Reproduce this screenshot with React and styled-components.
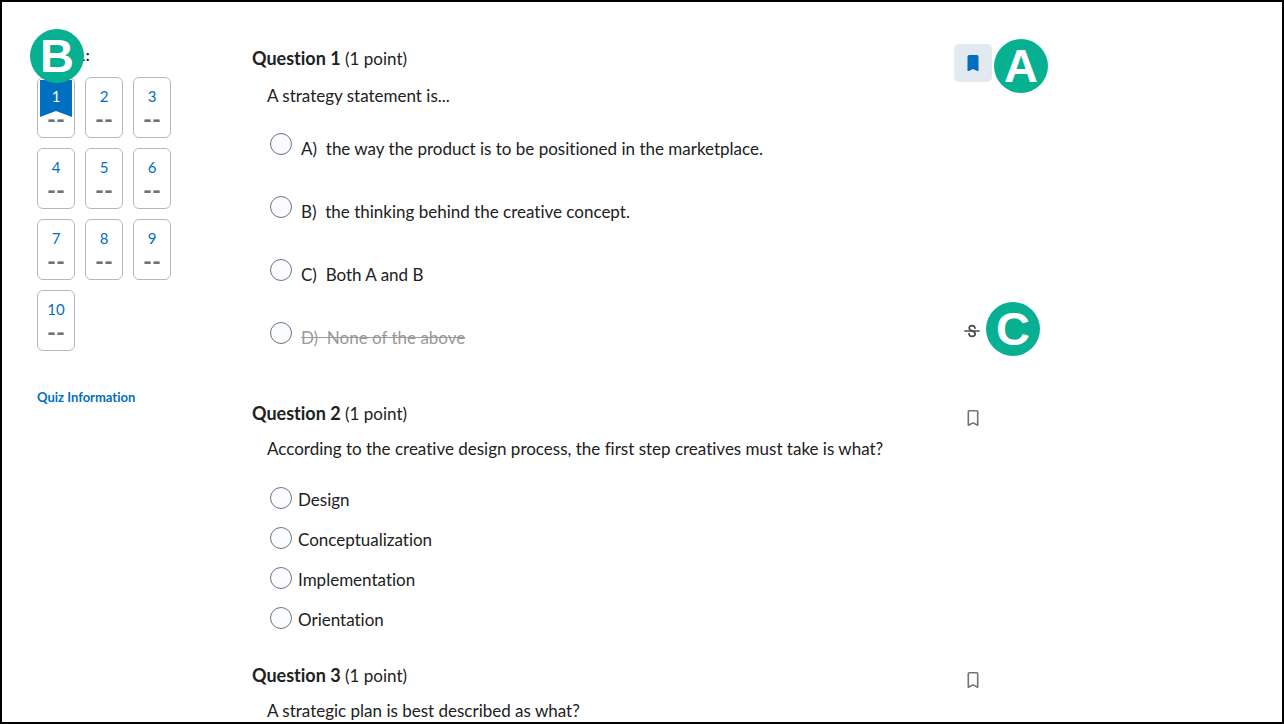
import { useState } from "react";
import styled, { createGlobalStyle } from "styled-components";

const pageQuestions = [1, 2, 3, 4, 5, 6, 7, 8, 9, 10];

const questions = [
  {
    number: 1,
    prompt: "A strategy statement is...",
    spaced: true,
    badge: "A",
    options: [
      { letter: "A)", text: "the way the product is to be positioned in the marketplace." },
      { letter: "B)", text: "the thinking behind the creative concept." },
      { letter: "C)", text: "Both A and B" },
      { letter: "D)", text: "None of the above", struck: true, badge: "C" },
    ],
  },
  {
    number: 2,
    prompt:
      "According to the creative design process, the first step creatives must take is what?",
    options: [
      { text: "Design" },
      { text: "Conceptualization" },
      { text: "Implementation" },
      { text: "Orientation" },
    ],
  },
  {
    number: 3,
    prompt: "A strategic plan is best described as what?",
    options: [],
  },
];

function BookmarkIcon({ filled }) {
  return (
    <svg width="18" height="18" viewBox="0 0 18 18" aria-hidden="true">
      {filled ? (
        <path
          d="M5.200 1h7.600a1.700 1.700 0 0 1 1.700 1.700V17h-1.200L9 15l-4.300 2H3.500V2.700A1.700 1.700 0 0 1 5.200 1z"
          fill="#006fbf"
        />
      ) : (
        <path
          d="M5.300 1.800h7.400a1 1 0 0 1 1 1v13.400L9 13.900l-4.700 2.300V2.800a1 1 0 0 1 1-1z"
          fill="none"
          stroke="#6e7376"
          strokeWidth="1.600"
          strokeLinejoin="round"
        />
      )}
    </svg>
  );
}

function StrikeIcon() {
  return (
    <svg width="16" height="14" viewBox="0 0 16 14" aria-hidden="true">
      <g fill="none" stroke="#494c4e" strokeWidth="1.700" strokeLinecap="round">
        <path d="M11 4.200C10.800 2.500 9.700 1.600 8.100 1.600 6.400 1.600 5.200 2.500 5.200 4c0 3.600 6 2.200 6 5.800 0 1.600-1.300 2.600-3.100 2.600-1.800 0-3-1-3.100-2.700" />
        <path d="M1 7h14" />
      </g>
    </svg>
  );
}

export default function App() {
  const [bookmarks, setBookmarks] = useState([1]);
  const [answers, setAnswers] = useState({});

  function toggleBookmark(number) {
    if (bookmarks.includes(number)) {
      setBookmarks(bookmarks.filter((item) => item !== number));
    } else {
      setBookmarks([...bookmarks, number]);
    }
  }

  return (
    <>
      <GlobalStyle />
      <Frame>
        <Sidebar>
          <PageTitle aria-label="Page 1:">
            <PageBadge>B</PageBadge>
            1:
          </PageTitle>
          <NumberGrid>
            {pageQuestions.map((number) => (
              <NumberCard key={number} type="button">
                <CardNumber $flagged={bookmarks.includes(number)}>{number}</CardNumber>
                <CardStatus>--</CardStatus>
              </NumberCard>
            ))}
          </NumberGrid>
          <InfoLink href="#info">Quiz Information</InfoLink>
        </Sidebar>

        <Quiz>
          {questions.map(({ number, prompt, spaced, badge, options }) => (
            <Question key={number}>
              <QuestionHeader>
                <QuestionTitle>
                  Question {number} <span>(1 point)</span>
                </QuestionTitle>
                <BookmarkButton
                  type="button"
                  aria-label={`Bookmark question ${number}`}
                  $active={bookmarks.includes(number)}
                  onClick={() => toggleBookmark(number)}
                >
                  <BookmarkIcon filled={bookmarks.includes(number)} />
                </BookmarkButton>
                {badge && <BookmarkBadge>{badge}</BookmarkBadge>}
              </QuestionHeader>
              <Prompt $spaced={spaced}>{prompt}</Prompt>

              <Options $spaced={spaced}>
                {options.map((option) => (
                  <OptionRow key={option.text} $spaced={spaced}>
                    <OptionLabel $spaced={spaced}>
                      <Radio
                        type="radio"
                        name={`question-${number}`}
                        checked={answers[number] === option.text}
                        onChange={() => setAnswers({ ...answers, [number]: option.text })}
                      />
                      <OptionText $struck={option.struck}>
                        {option.letter && <>{option.letter}&nbsp; </>}
                        {option.text}
                      </OptionText>
                    </OptionLabel>
                    {option.struck && (
                      <StrikeButton type="button" aria-label="Restore option">
                        <StrikeIcon />
                      </StrikeButton>
                    )}
                    {option.badge && <StrikeBadge>{option.badge}</StrikeBadge>}
                  </OptionRow>
                ))}
              </Options>
            </Question>
          ))}
        </Quiz>
      </Frame>
    </>
  );
}

const GlobalStyle = createGlobalStyle`
  * {
    box-sizing: border-box;
  }

  body {
    margin: 0;
    background-color: #fff;
    color: #202122;
    font-family: Lato, "Liberation Sans", sans-serif;
    font-variant-ligatures: none;
  }

  button {
    font-family: inherit;
    cursor: pointer;
  }
`;

const Frame = styled.div`
  height: 100vh;
  overflow: hidden;
  border: 2px solid #000;
  padding: 42px 35px 0;

  display: flex;
  gap: 81px;
`;

const Sidebar = styled.aside`
  width: 134px;
  flex-shrink: 0;
`;

const PageTitle = styled.h2`
  position: relative;
  margin: 0 0 11px;
  padding-left: 40px;

  font-size: 15px;
  line-height: 22px;
  font-weight: 700;
`;

const Badge = styled.div`
  width: 54px;
  height: 54px;
  border-radius: 50%;
  background-color: #06b090;

  display: flex;
  align-items: center;
  justify-content: center;

  color: #fff;
  font-family: "Liberation Sans", sans-serif;
  font-weight: 700;
  font-size: 47px;
  line-height: 54px;

  position: absolute;
`;

const PageBadge = styled(Badge)`
  top: -15px;
  left: -7px;
  z-index: 1;
`;

const BookmarkBadge = styled(Badge)`
  top: -5px;
  left: calc(100% + 2px);
`;

const StrikeBadge = styled(Badge)`
  top: -4px;
  left: calc(100% - 6px);
`;

const NumberGrid = styled.div`
  display: grid;
  grid-template-columns: repeat(3, 38px);
  gap: 10px;
`;

const NumberCard = styled.button`
  height: 61px;
  padding: 2px;
  border: 1px solid #b1b9be;
  border-radius: 6px;
  background-color: #fff;

  display: flex;
  flex-direction: column;
  align-items: center;
`;

const CardNumber = styled.span`
  width: 100%;
  height: 37px;
  flex-shrink: 0;
  padding-top: 4px;
  clip-path: polygon(0 0, 100% 0, 100% 100%, 50% 84%, 0 100%);

  background-color: ${({ $flagged }) => ($flagged ? "#006fbf" : "transparent")};
  color: ${({ $flagged }) => ($flagged ? "#fff" : "#006fbf")};
  font-size: 15px;
  line-height: 24px;
`;

const CardStatus = styled.span`
  margin-top: -8px;

  color: #6e7376;
  font-size: 24px;
  line-height: 20px;
  font-weight: 700;
`;

const InfoLink = styled.a`
  display: block;
  margin-top: 36px;

  color: #006fbf;
  font-size: 13px;
  line-height: 20px;
  font-weight: 700;
  text-decoration: none;
`;

const Quiz = styled.main`
  flex: 1;
  max-width: 740px;
`;

const Question = styled.section`
  font-size: 17px;
  line-height: 28px;
`;

const QuestionHeader = styled.div`
  position: relative;
  height: 36px;

  display: flex;
  align-items: flex-start;
  justify-content: space-between;
`;

const QuestionTitle = styled.h3`
  margin: 0;

  font-size: 18px;
  line-height: 28px;
  font-weight: 700;

  span {
    font-size: 17px;
    font-weight: 400;
  }
`;

const BookmarkButton = styled.button`
  width: 38px;
  height: 38px;
  flex-shrink: 0;
  padding: 0;
  border: none;
  border-radius: 5px;
  background-color: ${({ $active }) => ($active ? "#e3e9f1" : "transparent")};

  display: flex;
  align-items: center;
  justify-content: center;
`;

const Prompt = styled.p`
  margin: ${({ $spaced }) => ($spaced ? "2px" : "0")} 0 0 15px;
`;

const Options = styled.div`
  padding: ${({ $spaced }) => ($spaced ? "7px 0 30px" : "16px 0 22px")} 18px;
  padding-right: 0;
`;

const OptionRow = styled.div`
  position: relative;
  height: ${({ $spaced }) => ($spaced ? "63px" : "40px")};

  display: flex;
  align-items: center;
  justify-content: space-between;
`;

const OptionLabel = styled.label`
  display: flex;
  align-items: flex-start;
  gap: ${({ $spaced }) => ($spaced ? "9px" : "6px")};
  padding-top: ${({ $spaced }) => ($spaced ? "0" : "1px")};

  input {
    margin-top: ${({ $spaced }) => ($spaced ? "-2px" : "1px")};
  }
`;

const Radio = styled.input`
  appearance: none;
  width: 22px;
  height: 22px;
  flex-shrink: 0;
  margin: 0;
  border: 1px solid #6e7376;
  border-radius: 50%;
  background-color: #f9fbff;

  &:checked {
    border: 7px solid #006fbf;
  }
`;

const OptionText = styled.span`
  color: ${({ $struck }) => ($struck ? "#999" : "inherit")};
  text-decoration: ${({ $struck }) => ($struck ? "line-through" : "none")};
`;

const StrikeButton = styled.button`
  width: 38px;
  height: 38px;
  padding: 0;
  margin: 0 1px 14px 0;
  border: none;
  background-color: transparent;

  display: flex;
  align-items: center;
  justify-content: center;
`;
